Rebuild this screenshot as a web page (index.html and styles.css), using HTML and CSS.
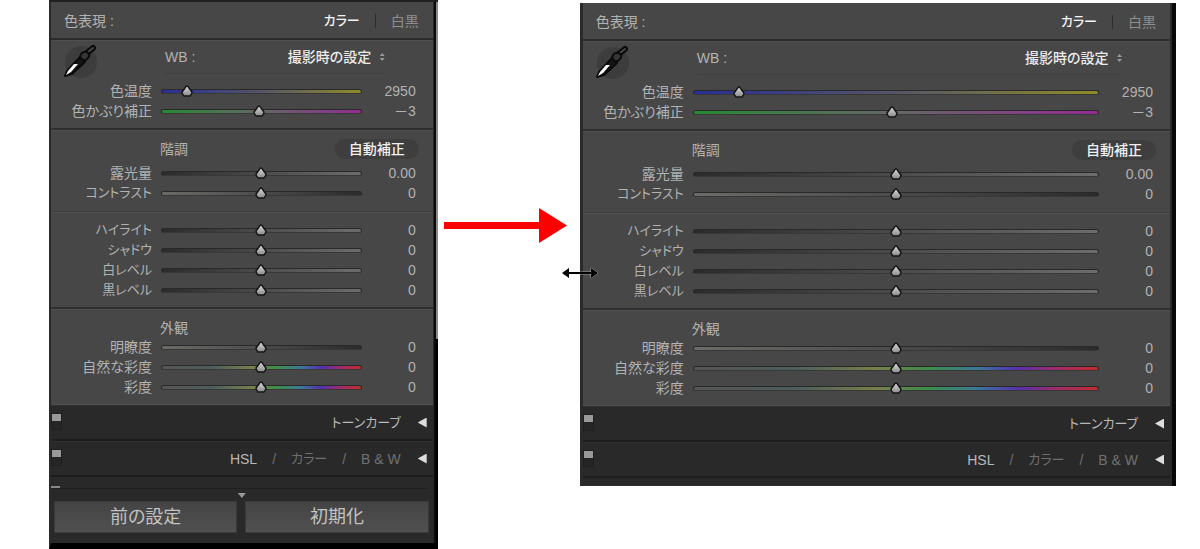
FILE: index.html
```html
<!DOCTYPE html>
<html lang="ja">
<head>
<meta charset="utf-8">
<meta name="viewport" content="width=device-width, initial-scale=1">
<title>基本補正</title>
<link rel="stylesheet" href="styles.css">
</head>
<body>
<svg class="defs" aria-hidden="true">
  <symbol id="dropper" viewBox="0 0 36 36">
    <circle cx="18" cy="18" r="16" fill="#3d3d3d"/>
    <path d="M2 32 L4 27 L17 13 L22 18 L9 30 Z" fill="#151515" stroke="#0b0b0b" stroke-width="2" stroke-linejoin="round"/>
    <path d="M3 31 L5 27 L11 20 L15 20 L8 28 Z" fill="#fff"/>
    <path d="M24 9 L30 4" stroke="#0b0b0b" stroke-width="6" stroke-linecap="round"/>
    <path d="M25 8 L30 4" stroke="#484848" stroke-width="2" stroke-linecap="round"/>
    <path d="M18 10 Q20 7 24 8 Q28 11 25 14 Q23 17 20 16 Q16 14 18 10 Z" fill="#353535" stroke="#0b0b0b" stroke-width="2"/>
  </symbol>
</svg>
<main class="stage">
  <section class="panel panel-narrow">
    <header class="treatment">
      <span>色表現 :</span>
      <button class="mode active kana">カラー</button><i class="bar"></i><button class="mode">白黒</button>
    </header>
    <div class="group balance">
      <button class="dropper" aria-label="ホワイトバランス選択"><svg><use href="#dropper"/></svg></button>
      <div class="wb"><label for="a-wb">WB :</label><span class="pick"><select id="a-wb"><option>撮影時の設定</option></select><i class="updown"></i></span></div>
      <div class="row"><label for="a-temp">色温度</label><input class="temp" id="a-temp" type="range" value="10"><output>2950</output></div>
      <div class="row"><label for="a-tint">色かぶり補正</label><input class="tint" id="a-tint" type="range" value="49"><output>－3</output></div>
    </div>
    <div class="group tone">
      <div class="title"><h2>階調</h2><button class="auto">自動補正</button></div>
      <div class="row"><label for="a-exp">露光量</label><input class="rise" id="a-exp" type="range"><output>0.00</output></div>
      <div class="row"><label class="kana" for="a-con">コントラスト</label><input class="fall" id="a-con" type="range"><output>0</output></div>
    </div>
    <div class="group levels">
      <div class="row"><label class="kana" for="a-hi">ハイライト</label><input class="rise" id="a-hi" type="range"><output>0</output></div>
      <div class="row"><label class="kana" for="a-sh">シャドウ</label><input class="rise" id="a-sh" type="range"><output>0</output></div>
      <div class="row"><label class="kana" for="a-wh">白レベル</label><input class="rise" id="a-wh" type="range"><output>0</output></div>
      <div class="row"><label class="kana" for="a-bl">黒レベル</label><input class="rise" id="a-bl" type="range"><output>0</output></div>
    </div>
    <div class="group presence">
      <div class="title"><h2>外観</h2></div>
      <div class="row"><label for="a-cl">明瞭度</label><input class="fall" id="a-cl" type="range"><output>0</output></div>
      <div class="row"><label for="a-vi">自然な彩度</label><input class="hue" id="a-vi" type="range"><output>0</output></div>
      <div class="row"><label for="a-sa">彩度</label><input class="hue" id="a-sa" type="range"><output>0</output></div>
    </div>
    <div class="fold"><i class="switch"></i><span class="curve kana">トーンカーブ</span><button class="open" aria-label="トーンカーブを開く"></button></div>
    <div class="fold"><i class="switch"></i><span class="tabs"><b>HSL</b><i>/</i><span class="kana">カラー</span><i>/</i><span>B &amp; W</span></span><button class="open" aria-label="HSLを開く"></button></div>
    <div class="cut"><i></i></div>
    <footer class="actions"><button>前の設定</button><button>初期化</button></footer>
  </section>

  <div class="between">
    <svg class="arrow" viewBox="0 0 123 35" aria-hidden="true"><path d="M0 14H95V0L123 17.500L95 35V21H0Z" fill="#f00"/></svg>
  </div>

  <section class="panel panel-wide">
    <header class="treatment">
      <span>色表現 :</span>
      <button class="mode active kana">カラー</button><i class="bar"></i><button class="mode">白黒</button>
    </header>
    <div class="group balance">
      <button class="dropper" aria-label="ホワイトバランス選択"><svg><use href="#dropper"/></svg></button>
      <div class="wb"><label for="b-wb">WB :</label><span class="pick"><select id="b-wb"><option>撮影時の設定</option></select><i class="updown"></i></span></div>
      <div class="row"><label for="b-temp">色温度</label><input class="temp" id="b-temp" type="range" value="10"><output>2950</output></div>
      <div class="row"><label for="b-tint">色かぶり補正</label><input class="tint" id="b-tint" type="range" value="49"><output>－3</output></div>
    </div>
    <div class="group tone">
      <div class="title"><h2>階調</h2><button class="auto">自動補正</button></div>
      <div class="row"><label for="b-exp">露光量</label><input class="rise" id="b-exp" type="range"><output>0.00</output></div>
      <div class="row"><label class="kana" for="b-con">コントラスト</label><input class="fall" id="b-con" type="range"><output>0</output></div>
    </div>
    <div class="group levels">
      <div class="row"><label class="kana" for="b-hi">ハイライト</label><input class="rise" id="b-hi" type="range"><output>0</output></div>
      <div class="row"><label class="kana" for="b-sh">シャドウ</label><input class="rise" id="b-sh" type="range"><output>0</output></div>
      <div class="row"><label class="kana" for="b-wh">白レベル</label><input class="rise" id="b-wh" type="range"><output>0</output></div>
      <div class="row"><label class="kana" for="b-bl">黒レベル</label><input class="rise" id="b-bl" type="range"><output>0</output></div>
    </div>
    <div class="group presence">
      <div class="title"><h2>外観</h2></div>
      <div class="row"><label for="b-cl">明瞭度</label><input class="fall" id="b-cl" type="range"><output>0</output></div>
      <div class="row"><label for="b-vi">自然な彩度</label><input class="hue" id="b-vi" type="range"><output>0</output></div>
      <div class="row"><label for="b-sa">彩度</label><input class="hue" id="b-sa" type="range"><output>0</output></div>
    </div>
    <div class="fold"><i class="switch"></i><span class="curve kana">トーンカーブ</span><button class="open" aria-label="トーンカーブを開く"></button></div>
    <div class="fold"><i class="switch"></i><span class="tabs"><b>HSL</b><i>/</i><span class="kana">カラー</span><i>/</i><span>B &amp; W</span></span><button class="open" aria-label="HSLを開く"></button></div>
    <svg class="resize" viewBox="0 0 38 12" aria-hidden="true"><path d="M1 6L8 1V5H30V1L37 6L30 11V7H8V11Z" fill="#000" stroke="#fff" stroke-opacity=".5" stroke-width="1" paint-order="stroke"/></svg>
  </section>
</main>
</body>
</html>
```
FILE: styles.css
```css
* { box-sizing: border-box; }
body {
  margin: 0;
  background: #fff;
  color: #b2b2b2;
  font: 14px/20px "Liberation Sans", "Noto Sans CJK JP", sans-serif;
  font-feature-settings: "palt";
}
button, select, input { font: inherit; font-feature-settings: inherit; color: inherit; margin: 0; padding: 0; border: 0; background: none; }
i, b { font-style: normal; font-weight: 400; }
h2 { margin: 0; font-size: 14px; font-weight: 400; }
.defs { display: none; }

.stage { display: flex; align-items: flex-start; padding: 0 24px 0 49px; }
.panel { position: relative; min-width: 0; background: #292929; border-left: 2px solid #2a2a2a; padding-right: 6px; }
.panel::after {
  content: "";
  position: absolute;
  inset: 0 0 0 auto;
  width: 4px;
  background: linear-gradient(90deg, #0a0a0a 2px, transparent 2px), linear-gradient(#8a8a8a 337px, #000 337px);
}
.panel-narrow { flex: 388 1 0; padding-right: 5px; border-top: 2px solid #202020; border-bottom: 6px solid #000; }
.panel-wide { flex: 597 1 0; margin-top: 3px; padding-bottom: 8px; border-left-width: 3px; }
.panel-wide::after { background: #080808; }
.between { flex: 0 0 142px; padding: 208px 13px 0 6px; }
.arrow { display: block; width: 100%; }

.treatment {
  display: flex;
  align-items: center;
  height: 38px;
  padding: 2px 14px 0 13px;
  background: #474747;
  border-bottom: 2px solid #2b2b2b;
}
.treatment > span { margin-right: auto; }
.mode { color: #8e8e8e; }
.mode.active { color: #f4f4f4; font-weight: 500; }
.bar { width: 1px; height: 14px; margin: 0 15px; background: #2e2e2e; }

.group { position: relative; background: #474747; border-bottom: 2px solid #303030; box-shadow: inset 0 1px #505050; }
.balance { padding-bottom: 7px; }
.dropper { position: absolute; left: 12px; top: 4px; width: 36px; height: 36px; }
.dropper svg { display: block; width: 36px; height: 36px; }
.wb { display: flex; align-items: center; justify-content: space-between; height: 34px; margin: 0 48px 7px 114px; padding-top: 1px; border-bottom: 1px solid #404040; }
.pick { display: flex; align-items: center; gap: 8px; }
.pick select { appearance: none; color: #ececec; font-weight: 500; }
.updown { width: 5px; height: 8px; background: #999; clip-path: polygon(50% 0, 100% 38%, 0 38%, 0 62%, 100% 62%, 50% 100%, 0 62%, 0 38%); }
.tone { padding: 8px 0; border-bottom: 1px solid #3d3d3d; }
.levels { padding: 8px 0 7px; }
.presence { padding: 8px 0 7px; border-bottom: 1px solid #505050; }
.title { display: flex; align-items: flex-start; justify-content: space-between; height: 25px; padding: 1px 14px 0 109px; }
.presence .title { height: 20px; }
.auto { height: 20px; line-height: 20px; padding: 0 14px; border-radius: 10px; background: #3e3e3e; color: #f0f0f0; font-weight: 500; }

.row { display: grid; grid-template-columns: 101px minmax(0, 1fr) 54px; align-items: center; height: 20px; padding-right: 17px; }
.row label, .row output { text-align: right; white-space: nowrap; }
.row input { appearance: none; width: auto; height: 14px; margin-left: 9px; background: none; }
.row input::-webkit-slider-runnable-track {
  height: 5px;
  border: 1px solid #292929;
  border-bottom-color: #383838;
  border-radius: 3px;
  background: var(--track);
}
.row input::-webkit-slider-thumb {
  appearance: none;
  width: 12px;
  height: 12px;
  margin-top: -5px;
  background: url("data:image/svg+xml,%3Csvg xmlns='http://www.w3.org/2000/svg' viewBox='0 0 12 12'%3E%3Cdefs%3E%3ClinearGradient id='g' x2='0' y2='1'%3E%3Cstop stop-color='%23ddd'/%3E%3Cstop offset='1' stop-color='%23888'/%3E%3C/linearGradient%3E%3C/defs%3E%3Cpath d='M6 1Q7 1 8 3L11 7Q11 9 9 11H3Q1 9 1 7L4 3Q5 1 6 1Z' fill='url(%23g)' stroke='%23151515' stroke-width='1.500'/%3E%3C/svg%3E") center / 12px 12px no-repeat;
}
.temp { --track: linear-gradient(90deg, #292f94, #555566 50%, #8f8b29); }
.tint { --track: linear-gradient(90deg, #258a33, #666 50%, #932b93); }
.rise { --track: linear-gradient(90deg, #2b2b2b, #4b4b4b 50%, #6c6c6c); }
.fall { --track: linear-gradient(90deg, #6b6b67, #4b4b4b 50%, #2b2b2b); }
.hue { --track: linear-gradient(90deg, #555, #4d5d5c 25%, #77804b 45%, #3d8d48 58%, #3c7898 70%, #5430b0 80%, #a22b68 90%, #c32b2b); }

.fold { display: flex; align-items: center; height: 36px; padding: 1px 6px 0 0; border-bottom: 2px solid #1d1d1d; box-shadow: inset 0 1px #303030; color: #b8b8b8; }
.switch { align-self: flex-start; width: 11px; height: 17px; margin-top: 7px; border: 1px solid #1f1f1f; background: linear-gradient(#999 7px, #252525 7px); }
.curve, .tabs { margin-left: auto; padding-right: 17px; }
.tabs { display: flex; gap: 15px; color: #707070; }
.tabs b { color: #b8b8b8; }
.kana { font-size: 13px; }
.open { width: 9px; height: 10px; background: #ddd; clip-path: polygon(0 50%, 100% 0, 100% 100%); }
.cut { height: 12px; margin-right: 4px; padding-top: 9px; border-bottom: 1px solid #202020; }
.cut i { display: block; width: 9px; height: 2px; background: #888; }
.actions { position: relative; display: grid; grid-template-columns: 1fr 1fr; gap: 8px; padding: 12px 4px 10px 3px; }
.actions::before { content: ""; position: absolute; left: calc(50% - 4px); top: 4px; width: 8px; height: 5px; background: #999; clip-path: polygon(0 0, 100% 0, 50% 100%); }
.actions button { height: 32px; font-size: 18px; line-height: 30px; color: #c2c2c2; background: linear-gradient(#444, #505050); border: 1px solid #3a3a3a; }
.panel-wide::before { content: ""; position: absolute; left: 0; right: 6px; bottom: 0; height: 1px; background: #303030; }
.resize { position: absolute; left: -22px; top: 264px; width: 38px; height: 12px; z-index: 1; }
```
